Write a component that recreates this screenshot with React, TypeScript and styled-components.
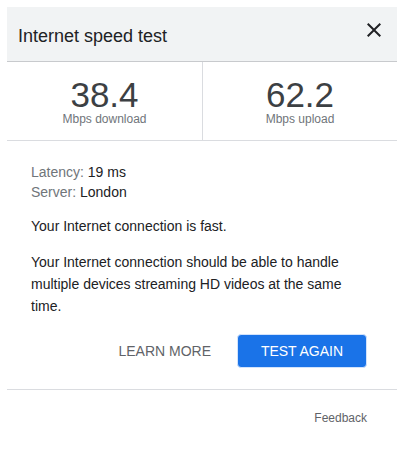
import React from 'react';
import styled, { createGlobalStyle } from 'styled-components';

/* ─────────────────────────── global ─────────────────────────── */
const GlobalStyle = createGlobalStyle`
  body {
    margin: 0;
    background: #fff;
    font-family: "Liberation Sans", Arial, sans-serif;
  }
`;

/* ─────────────────────────── styled components ─────────────────────────── */
const Card = styled.div`
  width: 390px;
  margin: 7px;
  background: #fff;
`;

const Header = styled.div`
  display: flex;
  justify-content: space-between;
  align-items: flex-start;
  height: 54px;
  padding: 0 11px 0 11px;
  background: #f1f3f4;
  border-bottom: 1px solid #c8cacd;
  box-sizing: content-box;
`;

const Title = styled.h1`
  margin: 18px 0 0;
  font-size: 18px;
  line-height: 22px;
  font-weight: 400;
  color: #202124;
`;

const CloseButton = styled.button`
  margin-top: 11px;
  padding: 0;
  border: 0;
  background: none;
  width: 24px;
  height: 24px;
  color: #202124;
  cursor: pointer;
`;

const Stats = styled.div`
  display: grid;
  grid-template-columns: 196px 1fr;
  border-bottom: 1px solid #dadce0;
`;

const Stat = styled.div<{ $divider?: boolean }>`
  display: flex;
  flex-direction: column;
  align-items: center;
  padding: 15px 0 15px;
  border-right: ${(p) => (p.$divider ? '1px solid #dadce0' : 'none')};
`;

const Value = styled.div`
  font-size: 35px;
  line-height: 36px;
  color: #3c4043;
`;

const Unit = styled.div`
  font-size: 12px;
  line-height: 12px;
  color: #70757a;
`;

const Body = styled.div`
  padding: 21px 30px 21px 24px;
  font-size: 14px;
  color: #202124;
`;

const InfoLine = styled.div`
  line-height: 20px;
`;

const Label = styled.span`
  color: #70757a;
`;

const Message = styled.p<{ $tall?: boolean }>`
  margin: ${(p) => (p.$tall ? '15px' : '14px')} 0 0;
  line-height: ${(p) => (p.$tall ? '22px' : '20px')};
`;

const Actions = styled.div`
  display: flex;
  justify-content: flex-end;
  align-items: center;
  gap: 14px;
  margin-top: 17px;
`;

const TextButton = styled.button`
  height: 34px;
  padding: 0 12px;
  border: 0;
  background: none;
  font-family: inherit;
  font-size: 14px;
  color: #5f6368;
  cursor: pointer;
`;

const PrimaryButton = styled.button`
  width: 130px;
  height: 34px;
  border: 1px solid #d2e3fc;
  border-radius: 4px;
  background: #1a73e8;
  font-family: inherit;
  font-size: 14px;
  color: #fff;
  cursor: pointer;
`;

const Footer = styled.div`
  display: flex;
  justify-content: flex-end;
  padding: 20px 30px 0;
  border-top: 1px solid #dadce0;
`;

const FeedbackLink = styled.a`
  font-size: 12px;
  line-height: 16px;
  color: #5f6368;
  text-decoration: none;
`;

/* ───────────────────────────── component ───────────────────────────── */
const App: React.FC = () => (
  <>
    <GlobalStyle />
    <Card>
      <Header>
        <Title>Internet speed test</Title>
        <CloseButton aria-label="Close">
          <svg width="24" height="24" viewBox="0 0 24 24" fill="currentColor">
            <path d="M19 6.41L17.59 5 12 10.59 6.41 5 5 6.41 10.59 12 5 17.59 6.41 19 12 13.41 17.59 19 19 17.59 13.41 12z" />
          </svg>
        </CloseButton>
      </Header>

      <Stats>
        <Stat $divider>
          <Value>38.4</Value>
          <Unit>Mbps download</Unit>
        </Stat>
        <Stat>
          <Value>62.2</Value>
          <Unit>Mbps upload</Unit>
        </Stat>
      </Stats>

      <Body>
        <InfoLine>
          <Label>Latency:</Label> 19 ms
        </InfoLine>
        <InfoLine>
          <Label>Server:</Label> London
        </InfoLine>
        <Message>Your Internet connection is fast.</Message>
        <Message $tall>
          Your Internet connection should be able to handle multiple devices streaming HD videos at the same time.
        </Message>
        <Actions>
          <TextButton>LEARN MORE</TextButton>
          <PrimaryButton>TEST AGAIN</PrimaryButton>
        </Actions>
      </Body>

      <Footer>
        <FeedbackLink href="#">Feedback</FeedbackLink>
      </Footer>
    </Card>
  </>
);

export default App;
